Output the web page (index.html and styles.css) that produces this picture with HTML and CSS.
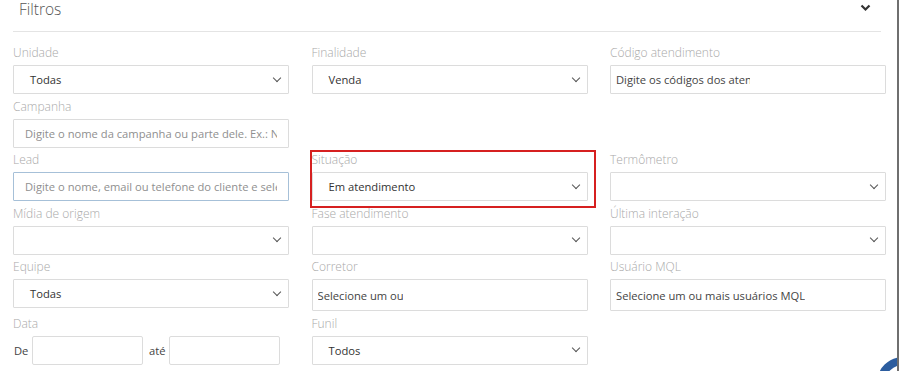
FILE: index.html
```html
<!DOCTYPE html>
<html lang="pt">
<head>
<meta charset="utf-8">
<link rel="stylesheet" href="styles.css">
</head>
<body>
<div class="page">
  <div class="panel">
    <div class="panel-head">
      <span class="title">Filtros</span>
      <svg class="head-chev" width="11" height="8" viewBox="0 0 11 8"><path d="M1.5 1.5 L5.5 5.5 L9.5 1.5" fill="none" stroke="#333" stroke-width="2.2"/></svg>
    </div>
    <div class="grid">
      <div class="field c1 r1"><label>Unidade</label><div class="select"><span>Todas</span><i class="chev"></i></div></div>
      <div class="field c2 r1"><label>Finalidade</label><div class="select"><span>Venda</span><i class="chev"></i></div></div>
      <div class="field c3 r1"><label>Código atendimento</label><div class="tokens"><span class="tok w1">Digite os códigos dos atendimentos</span></div></div>

      <div class="field c1 r2"><label>Campanha</label><div class="input"><span class="ph">Digite o nome da campanha ou parte dele. Ex.: Newsletter</span></div></div>

      <div class="field c1 r3"><label>Lead</label><div class="input focus"><span class="ph">Digite o nome, email ou telefone do cliente e selecione</span></div></div>
      <div class="field c2 r3 marked"><label>Situação</label><div class="select"><span>Em atendimento</span><i class="chev"></i></div></div>
      <div class="field c3 r3"><label>Termômetro</label><div class="select"><span></span><i class="chev"></i></div></div>

      <div class="field c1 r4"><label>Mídia de origem</label><div class="select"><span></span><i class="chev"></i></div></div>
      <div class="field c2 r4"><label>Fase atendimento</label><div class="select"><span></span><i class="chev"></i></div></div>
      <div class="field c3 r4"><label>Última interação</label><div class="select"><span></span><i class="chev"></i></div></div>

      <div class="field c1 r5"><label>Equipe</label><div class="select"><span>Todas</span><i class="chev"></i></div></div>
      <div class="field c2 r5"><label>Corretor</label><div class="tokens tall"><span class="tok w2">Selecione um ou mais corretores</span></div></div>
      <div class="field c3 r5"><label>Usuário MQL</label><div class="tokens tall"><span class="tok">Selecione um ou mais usuários MQL</span></div></div>

      <div class="field c1 r6"><label>Data</label>
        <div class="dates"><span class="dl">De</span><div class="date"></div><span class="dl ate">até</span><div class="date"></div></div>
      </div>
      <div class="field c2 r6"><label>Funil</label><div class="select"><span>Todos</span><i class="chev"></i></div></div>
    </div>
  </div>
  <div class="fab"></div>
</div>
</body>
</html>
```
FILE: styles.css
```css
html, body {
  margin: 0;
  padding: 0;
  background: #fff;
  font-family: "Open Sans", "Liberation Sans", sans-serif;
  overflow: hidden;
}
.page {
  position: relative;
  width: 897px;
  height: 371px;
  border-right: 2px solid #6f6f6f;
  overflow: hidden;
}
.panel {
  padding-left: 13px;
  width: 868px;
}
.panel-head {
  height: 31px;
  border-bottom: 1px solid #e4e4e4;
  display: flex;
  align-items: flex-start;
  justify-content: space-between;
  padding-left: 6px;
  padding-right: 10px;
}
.title {
  font-size: 15.5px;
  font-weight: 300;
  color: #555;
  line-height: 18px;
  margin-top: 0px;
}
.head-chev {
  margin-top: 4px;
}
.grid {
  margin-top: 11px;
  display: grid;
  grid-template-columns: 276px 276px 276px;
  column-gap: 22.5px;
  row-gap: 1.5px;
  grid-template-rows: 52px 52px 52px 52px 55px 52px;
}
.c1 { grid-column: 1; }
.c2 { grid-column: 2; }
.c3 { grid-column: 3; }
.r1 { grid-row: 1; }
.r2 { grid-row: 2; }
.r3 { grid-row: 3; }
.r4 { grid-row: 4; }
.r5 { grid-row: 5; }
.r6 { grid-row: 6; }
.field {
  position: relative;
  display: flex;
  flex-direction: column;
}
.field label {
  font-size: 12px;
  font-weight: 300;
  color: #a9a9a9;
  line-height: 20px;
  height: 20px;
  margin-bottom: 2px;
}
.select, .input, .tokens {
  box-sizing: border-box;
  height: 29px;
  border: 1px solid #dcdcdc;
  border-radius: 1px;
  display: flex;
  align-items: center;
  font-size: 11.2px;
  color: #333;
  white-space: nowrap;
  overflow: hidden;
}
.select {
  padding: 0 7px 0 16px;
  justify-content: space-between;
}
.chev {
  width: 5px;
  height: 5px;
  border-right: 1.2px solid #555;
  border-bottom: 1.2px solid #555;
  transform: rotate(45deg);
  margin-top: -4px;
  margin-right: 1px;
}
.input {
  padding: 0 11px;
}
.input.focus {
  border-color: #a6c0d8;
}
.ph {
  color: #8f8f8f;
  overflow: hidden;
}
.tokens {
  padding: 0 5px;
  color: #444;
}
.tokens.tall {
  height: 32px;
}
.tok {
  overflow: hidden;
  display: block;
}
.tok.w1 { width: 134px; }
.tok.w2 { width: 85px; }
.dates {
  display: flex;
  align-items: center;
  font-size: 11.2px;
  color: #444;
}
.dl {
  width: 18px;
  padding-left: 1px;
}
.dl.ate {
  width: 20px;
  margin-left: 5px;
}
.date {
  box-sizing: border-box;
  width: 111px;
  height: 29px;
  border: 1px solid #dcdcdc;
  border-radius: 2px;
}
.marked::after {
  content: "";
  position: absolute;
  left: -2px;
  top: 0;
  width: 286px;
  height: 58px;
  box-sizing: border-box;
  border: 2px solid #d62020;
}
.fab {
  position: absolute;
  left: 877px;
  top: 357px;
  width: 52px;
  height: 52px;
  box-sizing: border-box;
  border-radius: 50%;
  border: 8px solid #2c5d9f;
  background: #fff;
}
```
